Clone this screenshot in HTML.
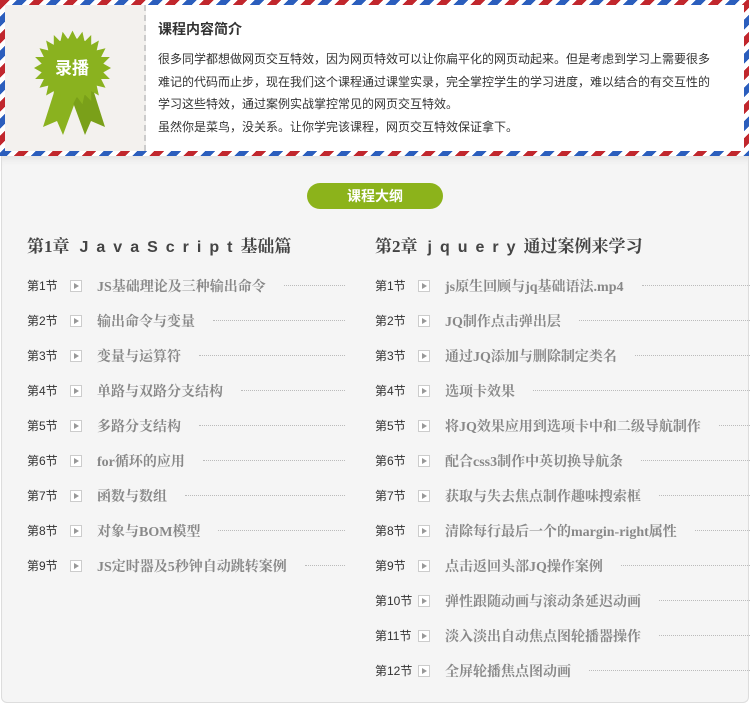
<!DOCTYPE html>
<html><head><meta charset="utf-8"><style>
*{margin:0;padding:0;box-sizing:border-box}
body{width:750px;height:725px;background:#fff;font-family:"Liberation Sans","Noto Sans CJK SC",sans-serif;position:relative;overflow:hidden}
.env{position:absolute;left:0;top:0;width:749px;height:156px;padding:5px;background:repeating-linear-gradient(135deg,#c1272d 0 7px,#fff 7px 12px,#2b5ebd 12px 19px,#fff 19px 24px)}
.inner{background:#fff;width:100%;height:100%;position:relative}
.badge{position:absolute;left:0;top:0;width:141px;height:100%;background:#f3f1ee;border-right:2px dashed #ccc}
.txt{position:absolute;left:153px;top:14px;width:568px;color:#333;font-size:12px;line-height:22.5px}
.txt h3{font-size:14px;font-weight:bold;margin-bottom:9px;line-height:20px}
.panel{position:absolute;left:1px;top:156px;width:748px;height:547px;background:#f5f5f5;border:1px solid #ddd;border-top:none;border-radius:0 0 6px 6px;box-shadow:inset 0 8px 8px -6px #ddd}
.pill{position:absolute;left:307px;top:183px;width:136px;height:26px;border-radius:13px;background:#8cb31b;color:#fff;font-size:14px;font-weight:bold;text-align:center;line-height:26px}
.col{position:absolute;top:232px}
.col h2{font-size:17px;font-weight:bold;color:#444;font-family:"Liberation Serif","Noto Serif CJK SC",serif;height:36px;line-height:30px;white-space:nowrap}
.col h2 .sp{font-family:"Liberation Sans",sans-serif;letter-spacing:8px;font-size:16px;margin-left:10px}
.row{height:35px;position:relative;display:flex;align-items:center;font-size:12px;color:#333}
.row .n{width:43px}
.row .ic{width:12px;height:12px;border:1px solid #ccc;background:#fff;position:relative;margin-right:15px}
.row .ic:after{content:"";position:absolute;left:3px;top:2px;border-left:5px solid #999;border-top:3px solid transparent;border-bottom:3px solid transparent}
.row .t{font-size:14px;font-weight:bold;color:#888;font-family:"Liberation Serif","Noto Serif CJK SC",serif;white-space:nowrap}
.row .d{flex:1;border-top:1px dotted #bbb;margin-left:18px;height:0}
</style></head><body>
<div class="env"><div class="inner">
<div class="badge"><svg width="141" height="146" viewBox="0 0 141 146">
<polygon points="52,78 38,122 52,116 58,130 72,92" fill="#8ab21f"/>
<polygon points="86,78 100,122 86,116 80,130 66,92" fill="#7aa019"/>
<g transform="translate(-4,-3) scale(1.1)" fill="#8ab21f"><circle cx="65" cy="60" r="27"/>
<polygon points="65,26 69,34 74,27 76,36 82,30 82,39 89,35 87,44 95,42 91,50 99,50 93,56 100,60 93,64 99,70 91,70 95,78 87,76 89,85 82,81 82,90 76,84 74,93 69,86 65,94 61,86 56,93 54,84 48,90 48,81 41,85 43,76 35,78 39,70 31,70 37,64 30,60 37,56 31,50 39,50 35,42 43,44 41,35 48,39 48,30 54,36 56,27 61,34"/></g>
<text x="67" y="69" text-anchor="middle" fill="#fff" font-size="17" font-weight="bold" font-family="Noto Sans CJK SC,sans-serif">录播</text></svg></div>
<div class="txt"><h3>课程内容简介</h3>
很多同学都想做网页交互特效，因为网页特效可以让你扁平化的网页动起来。但是考虑到学习上需要很多<br>难记的代码而止步，现在我们这个课程通过课堂实录，完全掌控学生的学习进度，难以结合的有交互性的<br>学习这些特效，通过案例实战掌控常见的网页交互特效。<br>虽然你是菜鸟，没关系。让你学完该课程，网页交互特效保证拿下。</div>
</div></div>
<div class="panel"></div>
<div class="pill">课程大纲</div>
<div class="col" style="left:27px;width:318px">
<h2>第1章<span class="sp">JavaScript</span>基础篇</h2>
<div class="row"><span class="n">第1节</span><span class="ic"></span><span class="t">JS基础理论及三种输出命令</span><span class="d"></span></div>
<div class="row"><span class="n">第2节</span><span class="ic"></span><span class="t">输出命令与变量</span><span class="d"></span></div>
<div class="row"><span class="n">第3节</span><span class="ic"></span><span class="t">变量与运算符</span><span class="d"></span></div>
<div class="row"><span class="n">第4节</span><span class="ic"></span><span class="t">单路与双路分支结构</span><span class="d"></span></div>
<div class="row"><span class="n">第5节</span><span class="ic"></span><span class="t">多路分支结构</span><span class="d"></span></div>
<div class="row"><span class="n">第6节</span><span class="ic"></span><span class="t">for循环的应用</span><span class="d"></span></div>
<div class="row"><span class="n">第7节</span><span class="ic"></span><span class="t">函数与数组</span><span class="d"></span></div>
<div class="row"><span class="n">第8节</span><span class="ic"></span><span class="t">对象与BOM模型</span><span class="d"></span></div>
<div class="row"><span class="n">第9节</span><span class="ic"></span><span class="t">JS定时器及5秒钟自动跳转案例</span><span class="d"></span></div>
</div>
<div class="col" style="left:375px;width:375px">
<h2>第2章<span class="sp">jquery</span>通过案例来学习</h2>
<div class="row"><span class="n">第1节</span><span class="ic"></span><span class="t">js原生回顾与jq基础语法.mp4</span><span class="d"></span></div>
<div class="row"><span class="n">第2节</span><span class="ic"></span><span class="t">JQ制作点击弹出层</span><span class="d"></span></div>
<div class="row"><span class="n">第3节</span><span class="ic"></span><span class="t">通过JQ添加与删除制定类名</span><span class="d"></span></div>
<div class="row"><span class="n">第4节</span><span class="ic"></span><span class="t">选项卡效果</span><span class="d"></span></div>
<div class="row"><span class="n">第5节</span><span class="ic"></span><span class="t">将JQ效果应用到选项卡中和二级导航制作</span><span class="d"></span></div>
<div class="row"><span class="n">第6节</span><span class="ic"></span><span class="t">配合css3制作中英切换导航条</span><span class="d"></span></div>
<div class="row"><span class="n">第7节</span><span class="ic"></span><span class="t">获取与失去焦点制作趣味搜索框</span><span class="d"></span></div>
<div class="row"><span class="n">第8节</span><span class="ic"></span><span class="t">清除每行最后一个的margin-right属性</span><span class="d"></span></div>
<div class="row"><span class="n">第9节</span><span class="ic"></span><span class="t">点击返回头部JQ操作案例</span><span class="d"></span></div>
<div class="row"><span class="n">第10节</span><span class="ic"></span><span class="t">弹性跟随动画与滚动条延迟动画</span><span class="d"></span></div>
<div class="row"><span class="n">第11节</span><span class="ic"></span><span class="t">淡入淡出自动焦点图轮播器操作</span><span class="d"></span></div>
<div class="row"><span class="n">第12节</span><span class="ic"></span><span class="t">全屏轮播焦点图动画</span><span class="d"></span></div>
</div>
</body></html>
